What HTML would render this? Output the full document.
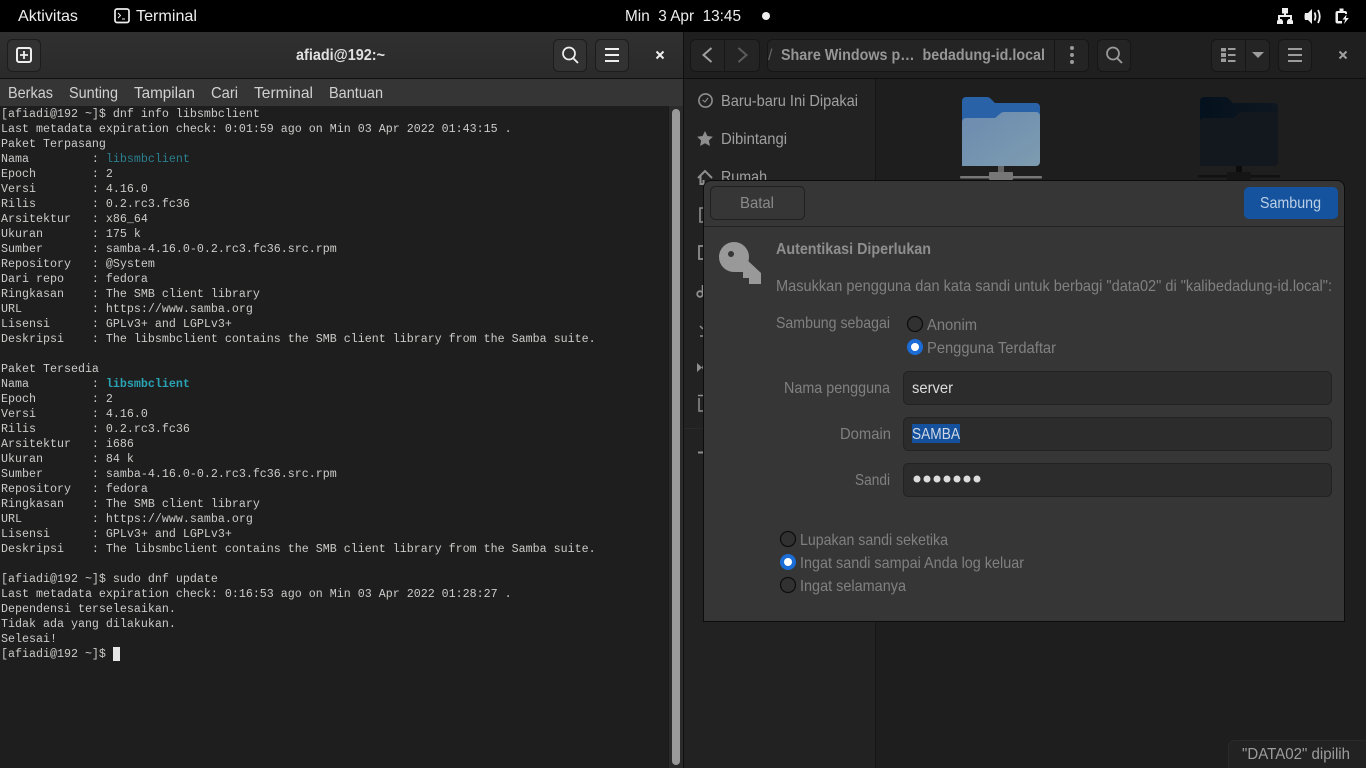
<!DOCTYPE html>
<html><head><meta charset="utf-8"><title>Terminal</title>
<style>
html,body{margin:0;padding:0;width:1366px;height:768px;overflow:hidden;background:#1e1e1e}
#ui{position:absolute;left:0;top:0}
pre{position:absolute;left:1px;top:107px;margin:0;font:11.67px/15px "Liberation Mono",monospace;color:#cbcbc9;white-space:pre}
.c1{color:#2a7f8e}.c2{color:#2aa3b5;font-weight:bold}
text{font-family:"Liberation Sans",sans-serif;font-size:16px}
text.b{font-size:15.5px;font-weight:bold}
</style></head><body>
<svg id="ui" width="1366" height="768" viewBox="0 0 1366 768" xmlns="http://www.w3.org/2000/svg">
<defs>
<linearGradient id="hd" x1="0" y1="0" x2="0" y2="1"><stop offset="0" stop-color="#303030"/><stop offset="1" stop-color="#2a2a2a"/></linearGradient>
<linearGradient id="fr" x1="0" y1="0" x2="1" y2="1"><stop offset="0" stop-color="#6c8bb0"/><stop offset="1" stop-color="#7d9cb0"/></linearGradient>
<linearGradient id="dk" x1="0" y1="0" x2="1" y2="0"><stop offset="0" stop-color="#04111e"/><stop offset="1" stop-color="#0e1720"/></linearGradient>
</defs>
<rect width="1366" height="768" fill="#1e1e1e"/>
<!-- top bar -->
<rect width="1366" height="32" fill="#000"/>
<text x="18" y="21" textLength="60" lengthAdjust="spacingAndGlyphs" fill="#eee">Aktivitas</text>
<text x="136" y="21" textLength="61" lengthAdjust="spacingAndGlyphs" fill="#eee">Terminal</text>
<text x="625" y="21" textLength="116" lengthAdjust="spacingAndGlyphs" fill="#eee" xml:space="preserve">Min  3 Apr  13:45</text>
<rect x="115" y="9" width="14" height="13.500" rx="2" fill="none" stroke="#eee" stroke-width="1.700"/>
<path d="M118 13l2.500 2.500-2.500 2.500M122 19h3" fill="none" stroke="#eee" stroke-width="1"/>
<circle cx="766" cy="16" r="4" fill="#eee"/>
<g fill="#eee">
<rect x="1282" y="8" width="6" height="5.500"/>
<path d="M1277 24v-3l1.500-2h3l1.500 2v3zM1287 24v-3l1.500-2h3l1.500 2v3z"/>
<path d="M1284 13h2v2h6v4h-2v-2h-10v2h-2v-4h6z"/>
<path d="M1305 13h3l4-4v15l-4-4h-3q-1-3.500 0-7z"/>
<path d="M1314.500 12.500q2 4 0 8M1318 10q3.500 6.500 0 13" fill="none" stroke="#eee" stroke-width="1.800"/>
<path d="M1339.500 8.500h4V11h1.500q2 0 2 2v1h-2v-1h-7v8h4v2.500h-4.500q-2 0-2-2V13q0-2 2-2h2z"/>
<path d="M1346.500 14.500l-4 5h2.700l-1.200 4.500 4.800-6h-2.800z"/>
</g>
<!-- terminal window -->
<rect x="0" y="32" width="683" height="46" fill="url(#hd)"/>
<rect x="0" y="78" width="683" height="1" fill="#111"/>
<rect x="0" y="79" width="683" height="27" fill="#353535"/>
<rect x="0" y="106" width="669" height="662" fill="#1e1e1e"/>
<rect x="669" y="106" width="14" height="662" fill="#2b2b2b"/>
<rect x="668" y="106" width="1" height="662" fill="#1a1a1a"/>
<rect x="672" y="109" width="8" height="656" rx="4" fill="#9a9a9a"/>
<rect x="683" y="32" width="1" height="736" fill="#0f0f0f"/>
<g fill="#323232" stroke="#1c1c1c">
<rect x="7.500" y="39.500" width="33" height="32" rx="5"/>
<rect x="553.500" y="39.500" width="33" height="32" rx="5"/>
<rect x="595.500" y="39.500" width="33" height="32" rx="5"/>
</g>
<rect x="17" y="48" width="14" height="14" rx="2" fill="none" stroke="#eee" stroke-width="2"/>
<path d="M24 51v8M20 55h8" stroke="#eee" stroke-width="1.800" fill="none"/>
<text class="b" x="296" y="60" textLength="89" lengthAdjust="spacingAndGlyphs" fill="#e0e0e0">afiadi@192:~</text>
<circle cx="569" cy="53.500" r="6" fill="none" stroke="#eee" stroke-width="1.700"/>
<path d="M573 58l5 5" stroke="#eee" stroke-width="1.900"/>
<path d="M605 48h14v2h-14zM605 54h14v2h-14zM605 60h14v2h-14z" fill="#eee"/>
<path d="M656.500 51.500l7 7M663.500 51.500l-7 7" stroke="#eee" stroke-width="2"/>
<text x="8" y="98" textLength="45" lengthAdjust="spacingAndGlyphs" fill="#d0d0d0">Berkas</text>
<text x="69" y="98" textLength="49" lengthAdjust="spacingAndGlyphs" fill="#d0d0d0">Sunting</text>
<text x="134" y="98" textLength="61" lengthAdjust="spacingAndGlyphs" fill="#d0d0d0">Tampilan</text>
<text x="211" y="98" textLength="27" lengthAdjust="spacingAndGlyphs" fill="#d0d0d0">Cari</text>
<text x="254" y="98" textLength="59" lengthAdjust="spacingAndGlyphs" fill="#d0d0d0">Terminal</text>
<text x="329" y="98" textLength="54" lengthAdjust="spacingAndGlyphs" fill="#d0d0d0">Bantuan</text>
<rect x="113" y="647" width="7" height="14" fill="#e6e6e6"/>
<!-- files window -->
<rect x="684" y="32" width="682" height="46" fill="#1f1f1f"/>
<rect x="684" y="78" width="682" height="1" fill="#0f0f0f"/>
<rect x="684" y="79" width="191" height="689" fill="#222"/>
<rect x="875" y="79" width="1" height="689" fill="#151515"/>
<rect x="876" y="79" width="490" height="689" fill="#1e1e1e"/>
<g fill="#242424" stroke="#161616">
<rect x="690.500" y="39.500" width="69" height="32" rx="5"/>
<rect x="767.500" y="39.500" width="321" height="32" rx="5"/>
<rect x="1097.500" y="39.500" width="33" height="32" rx="5"/>
<rect x="1211.500" y="39.500" width="58" height="32" rx="5"/>
<rect x="1278.500" y="39.500" width="33" height="32" rx="5"/>
</g>
<path d="M724.500 39v32M1054.500 39v32M1245.500 39v32" stroke="#161616"/>
<path d="M711.500 48l-8 7 8 7" fill="none" stroke="#a0a0a0" stroke-width="2"/>
<path d="M738.500 48l8 7-8 7" fill="none" stroke="#5c5c5c" stroke-width="2"/>
<text x="768" y="60" fill="#666">/</text>
<text class="b" x="781" y="60" textLength="264" lengthAdjust="spacingAndGlyphs" fill="#969696" xml:space="preserve">Share Windows p…  bedadung-id.local</text>
<g fill="#999"><circle cx="1072" cy="48" r="2"/><circle cx="1072" cy="55" r="2"/><circle cx="1072" cy="62" r="2"/></g>
<circle cx="1113" cy="53.500" r="6" fill="none" stroke="#9c9c9c" stroke-width="1.700"/>
<path d="M1117 58l5 5" stroke="#9c9c9c" stroke-width="1.900"/>
<g fill="#9c9c9c">
<rect x="1221" y="48" width="5" height="3.500"/><rect x="1221" y="53" width="5" height="4"/><rect x="1221" y="58.500" width="5" height="3.500"/>
<rect x="1228" y="48" width="7.500" height="2"/><rect x="1228" y="54" width="7.500" height="2"/><rect x="1228" y="60" width="7.500" height="2"/>
<path d="M1252 52h12l-6 6z"/>
<rect x="1288" y="48" width="14" height="2"/><rect x="1288" y="54" width="14" height="2"/><rect x="1288" y="60" width="14" height="2"/>
</g>
<path d="M1339.500 51.500l7 7M1346.500 51.500l-7 7" stroke="#a0a0a0" stroke-width="2"/>
<!-- sidebar -->
<circle cx="705.500" cy="100.500" r="6.600" fill="none" stroke="#8e8e8e" stroke-width="1.600"/>
<path d="M702.500 100l2.500 2 3-4" fill="none" stroke="#8e8e8e" stroke-width="1.100"/>
<text x="721" y="106" textLength="137" lengthAdjust="spacingAndGlyphs" fill="#a0a0a0">Baru-baru Ini Dipakai</text>
<path d="M705 131l2.400 5 5.500.700-4 3.800 1 5.500-4.900-2.700-4.900 2.700 1-5.500-4-3.800 5.500-.700z" fill="#8e8e8e"/>
<text x="721" y="144" textLength="66" lengthAdjust="spacingAndGlyphs" fill="#a0a0a0">Dibintangi</text>
<path d="M698 178l7-7 7 7M700.500 176v8h3v-4" fill="none" stroke="#8e8e8e" stroke-width="2"/>
<text x="721" y="182" textLength="46" lengthAdjust="spacingAndGlyphs" fill="#a0a0a0">Rumah</text>
<path d="M704 208h-4v14h4" fill="none" stroke="#8e8e8e" stroke-width="1.600"/>
<path d="M704 246h-5v13h5" fill="none" stroke="#8e8e8e" stroke-width="1.800"/>
<circle cx="700" cy="294" r="2.800" fill="none" stroke="#8e8e8e" stroke-width="1.800"/>
<path d="M702.500 294v-9" stroke="#8e8e8e" stroke-width="1.500"/>
<path d="M700 326l3 3M700 336h4" stroke="#8e8e8e" stroke-width="1.500"/>
<path d="M697 363l5 4.500-5 4.500zM704 363l-2 4.500 2 4.500z" fill="#8e8e8e"/>
<path d="M698 395.500h6M699 398v13h5" fill="none" stroke="#8e8e8e" stroke-width="1.500"/>
<rect x="684" y="428" width="20" height="1" fill="#2a2a2a"/>
<rect x="698" y="451.500" width="6" height="2" fill="#8e8e8e"/>
<!-- folders -->
<path d="M962 101a4 4 0 0 1 4-4h21q2 0 3.500 1.500L995 103h41a4 4 0 0 1 4 4v20h-78z" fill="#2a62a8"/>
<path d="M962 122a4 4 0 0 1 4-4h29l6-5q1-1 3-1h32a4 4 0 0 1 4 4v46a4 4 0 0 1-4 4h-74z" fill="url(#fr)"/>
<rect x="998" y="166" width="6" height="6" fill="#666"/>
<rect x="960" y="176" width="82" height="2.500" rx="1" fill="#777"/>
<rect x="989" y="172" width="24" height="8" rx="1" fill="#777"/>
<path d="M1200 101a4 4 0 0 1 4-4h21q2 0 3.500 1.500L1233 103h41a4 4 0 0 1 4 4v20h-78z" fill="url(#dk)"/>
<path d="M1200 122a4 4 0 0 1 4-4h29l6-5q1-1 3-1h32a4 4 0 0 1 4 4v46a4 4 0 0 1-4 4h-74z" fill="#12181e"/>
<rect x="1236" y="166" width="6" height="6" fill="#0c0c0c"/>
<rect x="1198" y="175" width="82" height="2.500" rx="1" fill="#111"/>
<rect x="1227" y="172" width="24" height="8" rx="1" fill="#151515"/>
<rect x="1228.500" y="740.500" width="150" height="40" rx="6" fill="#222" stroke="#2a2a2a"/>
<text x="1242" y="759" textLength="108" lengthAdjust="spacingAndGlyphs" fill="#9c9c9c">"DATA02" dipilih</text>
<!-- dialog -->
<path d="M703.500 621.500V188a7.500 7.500 0 0 1 7.500-7.500h626a7.500 7.500 0 0 1 7.500 7.500v433.500z" fill="#363636" stroke="#0c0c0c"/>
<rect x="704" y="226" width="640" height="1" fill="#222"/>
<rect x="710.500" y="186.500" width="94" height="33" rx="5" fill="#363636" stroke="#202020"/>
<text x="740" y="208" textLength="34" lengthAdjust="spacingAndGlyphs" fill="#8a8a8a">Batal</text>
<rect x="1244" y="187" width="94" height="32" rx="5" fill="#15539e"/>
<text x="1260" y="208" textLength="61" lengthAdjust="spacingAndGlyphs" fill="#bcd0e6">Sambung</text>
<circle cx="734" cy="257" r="15" fill="#999"/>
<path d="M745 258l16 15v11h-12v-6h-6v-6h-8z" fill="#999"/>
<circle cx="731" cy="254" r="3" fill="#363636"/>
<text class="b" x="776" y="254" textLength="155" lengthAdjust="spacingAndGlyphs" fill="#8e8e8e">Autentikasi Diperlukan</text>
<text x="776" y="291" textLength="556" lengthAdjust="spacingAndGlyphs" fill="#808080">Masukkan pengguna dan kata sandi untuk berbagi "data02" di "kalibedadung-id.local":</text>
<text x="776" y="328" textLength="114" lengthAdjust="spacingAndGlyphs" fill="#808080">Sambung sebagai</text>
<circle cx="915" cy="324" r="7.500" fill="#313131" stroke="#0e0e0e" stroke-width="1.300"/>
<text x="927" y="330" textLength="50" lengthAdjust="spacingAndGlyphs" fill="#808080">Anonim</text>
<circle cx="915" cy="347" r="8" fill="#1c6cd6"/><circle cx="915" cy="347" r="4" fill="#fff"/>
<text x="927" y="353" textLength="129" lengthAdjust="spacingAndGlyphs" fill="#808080">Pengguna Terdaftar</text>
<text x="784" y="393" textLength="106" lengthAdjust="spacingAndGlyphs" fill="#808080">Nama pengguna</text>
<rect x="903.500" y="371.500" width="428" height="33" rx="5" fill="#2c2c2c" stroke="#222"/>
<text x="912" y="393" textLength="41" lengthAdjust="spacingAndGlyphs" fill="#dcdcdc">server</text>
<text x="840" y="439" textLength="51" lengthAdjust="spacingAndGlyphs" fill="#808080">Domain</text>
<rect x="903.500" y="417.500" width="428" height="33" rx="5" fill="#2c2c2c" stroke="#222"/>
<rect x="912" y="424" width="48" height="19" fill="#15509c"/>
<text x="912" y="439" textLength="48" lengthAdjust="spacingAndGlyphs" fill="#cfd8e4">SAMBA</text>
<text x="855" y="485" textLength="35" lengthAdjust="spacingAndGlyphs" fill="#808080">Sandi</text>
<rect x="903.500" y="463.500" width="428" height="33" rx="5" fill="#2c2c2c" stroke="#222"/>
<g fill="#dcdcdc"><circle cx="917" cy="479" r="3.500"/><circle cx="927" cy="479" r="3.500"/><circle cx="937" cy="479" r="3.500"/><circle cx="947" cy="479" r="3.500"/><circle cx="957" cy="479" r="3.500"/><circle cx="967" cy="479" r="3.500"/><circle cx="977" cy="479" r="3.500"/></g>
<circle cx="788" cy="539" r="7.500" fill="#313131" stroke="#0e0e0e" stroke-width="1.300"/>
<text x="800" y="545" textLength="148" lengthAdjust="spacingAndGlyphs" fill="#808080">Lupakan sandi seketika</text>
<circle cx="788" cy="562" r="8" fill="#1c6cd6"/><circle cx="788" cy="562" r="4" fill="#fff"/>
<text x="800" y="568" textLength="224" lengthAdjust="spacingAndGlyphs" fill="#808080">Ingat sandi sampai Anda log keluar</text>
<circle cx="788" cy="585" r="7.500" fill="#313131" stroke="#0e0e0e" stroke-width="1.300"/>
<text x="800" y="591" textLength="106" lengthAdjust="spacingAndGlyphs" fill="#808080">Ingat selamanya</text>
</svg>
<pre>[afiadi@192 ~]$ dnf info libsmbclient
Last metadata expiration check: 0:01:59 ago on Min 03 Apr 2022 01:43:15 .
Paket Terpasang
Nama         : <span class="c1">libsmbclient</span>
Epoch        : 2
Versi        : 4.16.0
Rilis        : 0.2.rc3.fc36
Arsitektur   : x86_64
Ukuran       : 175 k
Sumber       : samba-4.16.0-0.2.rc3.fc36.src.rpm
Repository   : @System
Dari repo    : fedora
Ringkasan    : The SMB client library
URL          : https://www.samba.org
Lisensi      : GPLv3+ and LGPLv3+
Deskripsi    : The libsmbclient contains the SMB client library from the Samba suite.

Paket Tersedia
Nama         : <span class="c2">libsmbclient</span>
Epoch        : 2
Versi        : 4.16.0
Rilis        : 0.2.rc3.fc36
Arsitektur   : i686
Ukuran       : 84 k
Sumber       : samba-4.16.0-0.2.rc3.fc36.src.rpm
Repository   : fedora
Ringkasan    : The SMB client library
URL          : https://www.samba.org
Lisensi      : GPLv3+ and LGPLv3+
Deskripsi    : The libsmbclient contains the SMB client library from the Samba suite.

[afiadi@192 ~]$ sudo dnf update
Last metadata expiration check: 0:16:53 ago on Min 03 Apr 2022 01:28:27 .
Dependensi terselesaikan.
Tidak ada yang dilakukan.
Selesai!
[afiadi@192 ~]$ </pre>
</body></html>
